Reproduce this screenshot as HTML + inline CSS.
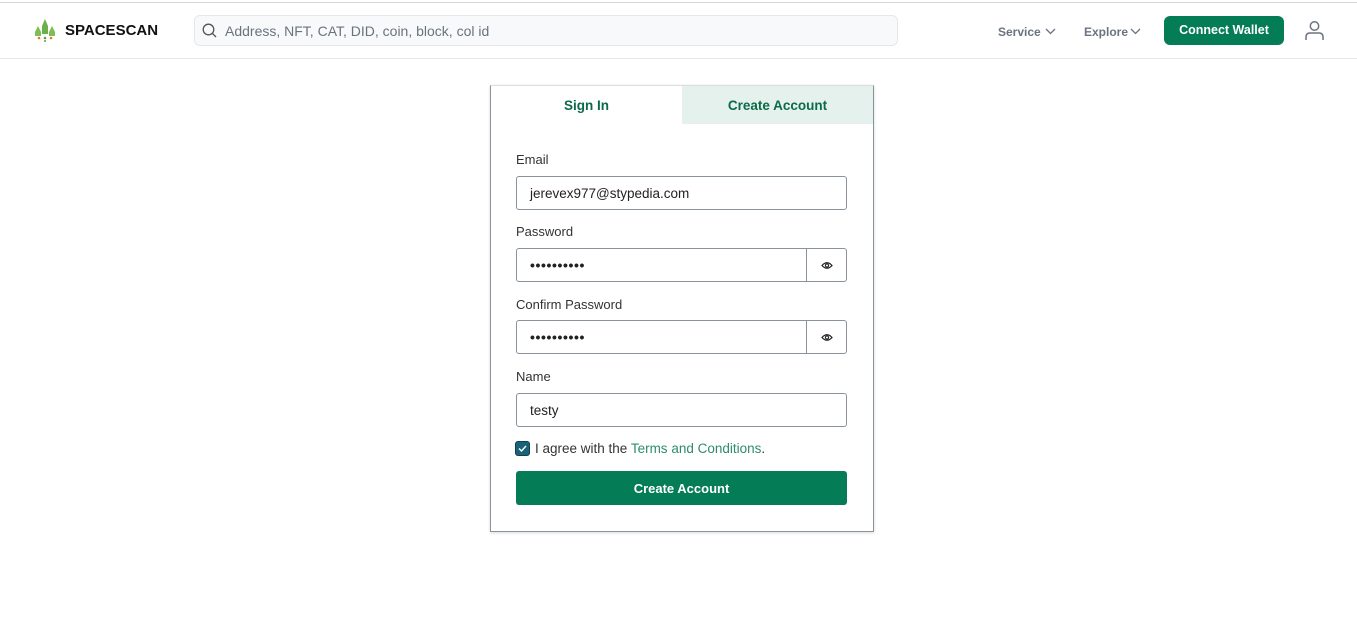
<!DOCTYPE html>
<html><head><meta charset="utf-8"><style>
*{box-sizing:border-box;margin:0;padding:0}
body{width:1357px;height:622px;background:#fff;font-family:"Liberation Sans",sans-serif;position:relative;overflow:hidden;color:#1f2937}
.top{position:absolute;left:0;top:2px;width:1357px;height:1px;background:#d8d8d8}
.hdr{position:absolute;left:0;top:58px;width:1357px;height:1px;background:#e8e8e8}
.abs{position:absolute}
.search{left:194px;top:15px;width:704px;height:31px;border:1px solid #e5e7eb;border-radius:6px;background:#f8f9fa}
.lbl{font-size:13px;color:#333}
.inp{position:absolute;left:516px;width:331px;height:34px;border:1px solid #8a939c;border-radius:3px;font-size:13.5px;color:#222;padding:9px 13px}
.eye{position:absolute;left:806px;width:41px;height:34px;border:1px solid #8a939c;border-radius:0 3px 3px 0;display:flex;align-items:center;justify-content:center}
.dots{font-size:14px;letter-spacing:0.6px;font-weight:bold;line-height:14px}
</style></head><body>
<div class="top"></div><div class="hdr"></div>
<svg class="abs" style="left:32px;top:18px" width="26" height="24" viewBox="0 0 26 24">
<path d="M13 1 L16 8 L16 16 L10 16 L10 8Z" fill="#6bb04a"/><path d="M6 8 L9 14 L9 18 L3 18 L3 14Z" fill="#7cbf55"/><path d="M20 8 L23 14 L23 18 L17 18 L17 14Z" fill="#7cbf55"/><circle cx="7" cy="20" r="1.3" fill="#e07a2a"/><circle cx="19" cy="20" r="1.3" fill="#e07a2a"/><circle cx="13" cy="20" r="1.3" fill="#5aa046"/><circle cx="13" cy="23" r="1" fill="#5aa046"/></svg>
<div class="abs" style="left:65px;top:22px;font-size:15px;font-weight:bold;color:#111">SPACESCAN</div>
<div class="abs search"></div>
<svg class="abs" style="left:202px;top:23px" width="15" height="15" viewBox="0 0 15 15"><circle cx="6.5" cy="6.5" r="5.3" fill="none" stroke="#555" stroke-width="1.3"/><path d="M10.5 10.5L14 14" stroke="#555" stroke-width="1.3"/></svg>
<div class="abs" style="left:225px;top:23px;font-size:14px;color:#6b7280">Address, NFT, CAT, DID, coin, block, col id</div>
<div class="abs" style="left:998px;top:25px;font-size:12px;color:#6b7280;font-weight:bold">Service</div>
<svg class="abs" style="left:1045px;top:28px" width="11" height="7"><path d="M1 1L5.5 5.5L10 1" fill="none" stroke="#6b7280" stroke-width="1.3"/></svg>
<div class="abs" style="left:1084px;top:25px;font-size:12px;color:#6b7280;font-weight:bold">Explore</div>
<svg class="abs" style="left:1130px;top:28px" width="11" height="7"><path d="M1 1L5.5 5.5L10 1" fill="none" stroke="#6b7280" stroke-width="1.3"/></svg>
<div class="abs" style="left:1164px;top:16px;width:120px;height:29px;background:#047c55;border-radius:6px;color:#fff;font-size:12.5px;font-weight:bold;text-align:center;line-height:28px">Connect Wallet</div>
<svg class="abs" style="left:1304px;top:20px" width="21" height="21" viewBox="0 0 21 21"><circle cx="10.5" cy="6" r="4.2" fill="none" stroke="#6b7280" stroke-width="1.5"/><path d="M2 20 V17 Q2 13 6 13 H15 Q19 13 19 17 V20" fill="none" stroke="#6b7280" stroke-width="1.5"/></svg>

<div class="abs" style="left:490px;top:85px;width:384px;height:447px;border:1px solid #8a939c;border-top-color:#ddd;box-shadow:0 1px 3px rgba(0,0,0,.15)"></div>
<div class="abs" style="left:682px;top:86px;width:191px;height:38px;background:#e5f1ec"></div>
<div class="abs" style="left:491px;top:98px;width:191px;text-align:center;font-size:13.5px;font-weight:bold;color:#0b6b48">Sign In</div>
<div class="abs" style="left:682px;top:98px;width:191px;text-align:center;font-size:13.5px;font-weight:bold;color:#0b6b48">Create Account</div>

<div class="abs lbl" style="left:516px;top:152px">Email</div>
<div class="inp" style="top:176px">jerevex977@stypedia.com</div>
<div class="abs lbl" style="left:516px;top:224px">Password</div>
<div class="inp" style="top:248px;width:291px;border-radius:3px 0 0 3px"><span class="dots">••••••••••</span></div>
<div class="eye" style="top:248px"><svg width="12" height="9" viewBox="0 0 12 9"><path d="M1 4.5Q6 -1 11 4.5Q6 10 1 4.5Z" fill="none" stroke="#222" stroke-width="1.2"/><circle cx="6" cy="4.5" r="1.6" fill="none" stroke="#222" stroke-width="1.1"/></svg></div>
<div class="abs lbl" style="left:516px;top:297px">Confirm Password</div>
<div class="inp" style="top:320px;width:291px;border-radius:3px 0 0 3px"><span class="dots">••••••••••</span></div>
<div class="eye" style="top:320px"><svg width="12" height="9" viewBox="0 0 12 9"><path d="M1 4.5Q6 -1 11 4.5Q6 10 1 4.5Z" fill="none" stroke="#222" stroke-width="1.2"/><circle cx="6" cy="4.5" r="1.6" fill="none" stroke="#222" stroke-width="1.1"/></svg></div>
<div class="abs lbl" style="left:516px;top:369px">Name</div>
<div class="inp" style="top:393px">testy</div>

<div class="abs" style="left:515px;top:441px;width:15px;height:15px;background:#1a6278;border:1px solid #0e3f52;border-radius:3px"><svg width="13" height="13" viewBox="0 0 13 13"><path d="M3 6.5L5.5 9L10 4" fill="none" stroke="#fff" stroke-width="1.4"/></svg></div>
<div class="abs" style="left:535px;top:441px;font-size:13.5px;color:#333">I agree with the <span style="color:#2e8b70">Terms and Conditions</span>.</div>
<div class="abs" style="left:516px;top:471px;width:331px;height:34px;background:#047c55;border-radius:3px;color:#fff;font-size:13px;font-weight:bold;text-align:center;line-height:35px">Create Account</div>
</body></html>
